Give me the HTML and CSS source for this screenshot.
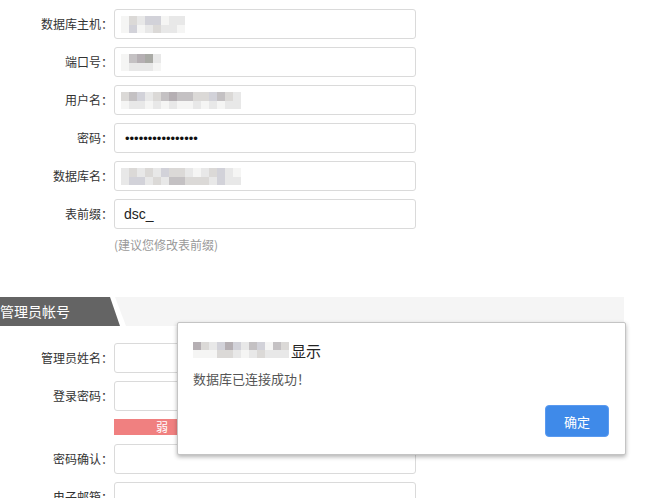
FILE: index.html
```html
<!DOCTYPE html>
<html lang="zh-CN">
<head>
  <meta charset="UTF-8">
  <title>安装 - 数据库配置</title>
  <link rel="stylesheet" href="styles.css">
</head>
<body>
  <!-- Database settings -->
  <div class="form-block db-block">
    <div class="row">
      <label class="label">数据库主机：</label>
      <div class="input">
        <span class="mosaic">
          <i class="t0"></i><i class="t0"></i><i class="t2"></i><i class="t3"></i><i class="t1"></i><i class="t0"></i><i class="t3"></i><i class="t1"></i><i class="t3"></i><i class="t2"></i><i class="t0"></i><i class="t1"></i><i class="t1"></i><i class="t1"></i><i class="t1"></i><i class="t0"></i>
        </span>
      </div>
    </div>
    <div class="row">
      <label class="label">端口号：</label>
      <div class="input">
        <span class="mosaic">
          <i class="t0"></i><i class="t0"></i><i class="t4"></i><i class="t1"></i><i class="t5"></i><i class="t1"></i><i class="t6"></i><i class="t1"></i><i class="t1"></i><i class="t0"></i>
        </span>
      </div>
    </div>
    <div class="row">
      <label class="label">用户名：</label>
      <div class="input">
        <span class="mosaic">
          <i class="t2"></i><i class="t0"></i><i class="t4"></i><i class="t1"></i><i class="t3"></i><i class="t1"></i><i class="t1"></i><i class="t0"></i><i class="t2"></i><i class="t1"></i><i class="t4"></i><i class="t0"></i><i class="t5"></i><i class="t1"></i><i class="t4"></i><i class="t0"></i><i class="t4"></i><i class="t0"></i><i class="t2"></i><i class="t1"></i><i class="t2"></i><i class="t0"></i><i class="t3"></i><i class="t1"></i><i class="t4"></i><i class="t0"></i><i class="t2"></i><i class="t1"></i><i class="t1"></i><i class="t1"></i>
        </span>
      </div>
    </div>
    <div class="row">
      <label class="label">密码：</label>
      <div class="input"><span class="dots">••••••••••••••••</span></div>
    </div>
    <div class="row">
      <label class="label">数据库名：</label>
      <div class="input">
        <span class="mosaic">
          <i class="t1"></i><i class="t1"></i><i class="t2"></i><i class="t3"></i><i class="t1"></i><i class="t3"></i><i class="t2"></i><i class="t1"></i><i class="t1"></i><i class="t2"></i><i class="t3"></i><i class="t1"></i><i class="t2"></i><i class="t4"></i><i class="t2"></i><i class="t4"></i><i class="t1"></i><i class="t2"></i><i class="t0"></i><i class="t2"></i><i class="t1"></i><i class="t2"></i><i class="t2"></i><i class="t1"></i><i class="t3"></i><i class="t3"></i><i class="t1"></i><i class="t1"></i><i class="t0"></i><i class="t1"></i>
        </span>
      </div>
    </div>
    <div class="row">
      <label class="label">表前缀：</label>
      <div class="input"><span class="value">dsc_</span></div>
    </div>
    <div class="hint">(建议您修改表前缀)</div>
  </div>

  <!-- Admin account section -->
  <div class="section-title">
    <div class="tab"><span>管理员帐号</span></div>
  </div>
  <div class="form-block admin-block">
    <div class="row">
      <label class="label">管理员姓名：</label>
      <div class="input"></div>
    </div>
    <div class="row">
      <label class="label">登录密码：</label>
      <div class="input"></div>
    </div>
    <div class="strength"><span>弱</span></div>
    <div class="row">
      <label class="label">密码确认：</label>
      <div class="input"></div>
    </div>
    <div class="row">
      <label class="label">电子邮箱：</label>
      <div class="input"></div>
    </div>
  </div>

  <!-- Browser alert dialog -->
  <div class="dialog">
    <div class="dialog-title">
      <span class="mosaic small">
        <i class="t5"></i><i class="t0"></i><i class="t2"></i><i class="t0"></i><i class="t1"></i><i class="t0"></i><i class="t3"></i><i class="t2"></i><i class="t5"></i><i class="t2"></i><i class="t3"></i><i class="t1"></i><i class="t1"></i><i class="t0"></i><i class="t4"></i><i class="t1"></i><i class="t3"></i><i class="t2"></i><i class="t0"></i><i class="t1"></i><i class="t4"></i><i class="t1"></i><i class="t2"></i><i class="t1"></i>
      </span>显示
    </div>
    <div class="dialog-msg">数据库已连接成功！</div>
    <div class="dialog-actions">
      <button class="btn-ok">确定</button>
    </div>
  </div>
</body>
</html>
```

FILE: styles.css
```css
body {
  margin: 0;
  font-family: "Noto Sans CJK SC", "Liberation Sans", sans-serif;
  color: #333;
  background: #fff;
  height: 498px;
  overflow: hidden;
}
/* Form rows */
.db-block {
  padding-top: 9px;
}
.row {
  display: flex;
  align-items: center;
  height: 30px;
  margin-bottom: 8px;
}
.label {
  width: 113px;
  text-align: right;
  font-size: 12px;
  line-height: 16px;
  color: #333;
  white-space: nowrap;
}
.input {
  box-sizing: border-box;
  width: 302px;
  height: 30px;
  margin-left: 1px;
  border: 1px solid #dadada;
  border-radius: 3px;
  padding-left: 6px;
  display: flex;
  align-items: center;
}
.dots {
  font-family: "Liberation Sans", sans-serif;
  font-size: 13px;
  color: #111;
  padding-left: 4px;
}
.value {
  font-size: 14px;
  color: #222;
  padding-left: 3px;
  font-family: "Liberation Sans", sans-serif;
}
.hint {
  margin-left: 114px;
  margin-top: 0;
  font-size: 12px;
  line-height: 16px;
  color: #999;
}
/* Pixelated (hidden) values */
.mosaic {
  display: inline-grid;
  grid-template-rows: 9px 8px;
  grid-auto-flow: column;
  grid-auto-columns: 8px;
}
.mosaic.small {
  grid-template-rows: 8px 8px;
  margin-right: 2px;
}
.mosaic i { display: block; }
.t0 { background: #f5f5f4; }
.t1 { background: #e8e8e8; }
.t2 { background: #dbd9d7; }
.t3 { background: #d2d2d9; }
.t4 { background: #c4c1c3; }
.t5 { background: #b5afb3; }
.t6 { background: #a9aaa5; }
/* Section header */
.section-title {
  margin-top: 44px;
  width: 624px;
  height: 29px;
  background: #f5f5f5;
}
.tab {
  position: relative;
  width: 126px;
  height: 29px;
  background: #fff;
  clip-path: polygon(0 0, 115px 0, 126px 100%, 0 100%);
}
.tab::before {
  content: "";
  position: absolute;
  inset: 0;
  background: #646464;
  clip-path: polygon(0 0, 110px 0, 120px 100%, 0 100%);
}
.tab span {
  position: relative;
  display: block;
  line-height: 28px;
  font-size: 14px;
  color: #fff;
}
.admin-block {
  padding-top: 17px;
}
.strength {
  margin: 0 0 9px 114px;
  width: 96px;
  height: 16px;
  background: #f08080;
  color: #fff;
  font-size: 12px;
  line-height: 16px;
  text-align: center;
}
/* Alert dialog (overlays the form) */
.dialog {
  position: absolute;
  left: 177px;
  top: 322px;
  box-sizing: border-box;
  width: 449px;
  height: 133px;
  background: #fff;
  border: 1px solid #c4c4c4;
  border-radius: 2px;
  box-shadow: 0 2px 4px rgba(0, 0, 0, 0.3);
  padding: 17px 16px 16px 15px;
}
.dialog-title {
  display: flex;
  align-items: center;
  height: 20px;
  font-size: 15px;
  color: #222;
}
.dialog-msg {
  margin-top: 10px;
  font-size: 13px;
  color: #555;
  line-height: 18px;
}
.dialog-actions {
  display: flex;
  justify-content: flex-end;
  margin-top: 17px;
}
.btn-ok {
  width: 64px;
  height: 32px;
  border: 1px solid #5a9af0;
  border-radius: 4px;
  background: #3f8ae9;
  color: #fff;
  font-family: inherit;
  font-size: 13px;
}
```
